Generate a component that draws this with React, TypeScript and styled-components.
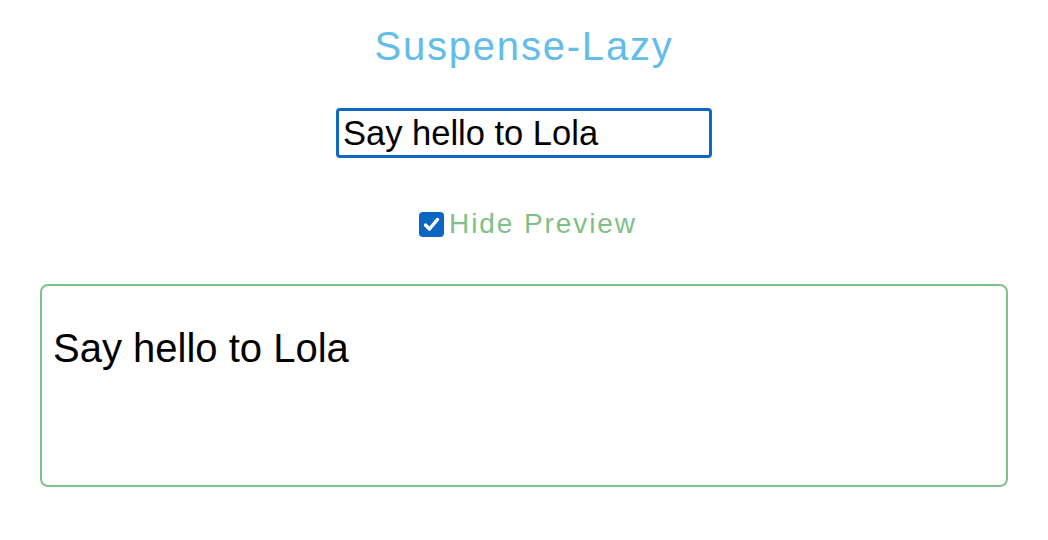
import React, { useState } from "react";
import styled, { createGlobalStyle } from "styled-components";

const Global = createGlobalStyle`
  html, body { margin: 0; padding: 0; background: #ffffff; }
  body { font-family: "Liberation Sans", Arial, sans-serif; }
`;

const Page = styled.div`
  display: flex;
  flex-direction: column;
  align-items: center;
  padding: 22px 40px 0 40px;
`;

const Title = styled.h1`
  margin: 0;
  font-size: 40px;
  font-weight: 400;
  letter-spacing: 1.8px;
  color: #63bde9;
  line-height: 48px;
`;

const TextInput = styled.input`
  margin-top: 38px;
  box-sizing: border-box;
  width: 376px;
  height: 50px;
  border: 3px solid #0f67c4;
  border-radius: 4px;
  padding: 0 4px;
  font-family: "Liberation Sans", Arial, sans-serif;
  font-size: 34.5px;
  color: #000;
  outline: none;
`;

const CheckRow = styled.label`
  margin-top: 50px;
  padding-left: 8px;
  display: flex;
  align-items: center;
  gap: 5px;
  font-size: 28px;
  letter-spacing: 1.9px;
  color: #80bf88;
`;

const Box = styled.span`
  width: 25px;
  height: 25px;
  border-radius: 4px;
  background: #0b66c3;
  display: flex;
  align-items: center;
  justify-content: center;
`;

const Preview = styled.div`
  margin-top: 44px;
  align-self: stretch;
  box-sizing: border-box;
  height: 203px;
  border: 2px solid #7ec38a;
  border-radius: 8px;
  padding: 40px 11px 0 11px;
  font-size: 40px;
  color: #000;
`;

export default function App() {
  const [text, setText] = useState("Say hello to Lola");
  const [hide] = useState(true);
  return (
    <>
      <Global />
      <Page>
        <Title>Suspense-Lazy</Title>
        <TextInput value={text} onChange={(e) => setText(e.target.value)} />
        <CheckRow>
          <Box>
            <svg width="19" height="19" viewBox="0 0 19 19">
              <path d="M3.5 10 L7.5 14 L15.5 4.5" fill="none" stroke="#fff" strokeWidth="3.4" strokeLinecap="round" strokeLinejoin="round" />
            </svg>
          </Box>
          {hide ? "Hide Preview" : "Show Preview"}
        </CheckRow>
        <Preview>{text}</Preview>
      </Page>
    </>
  );
}
